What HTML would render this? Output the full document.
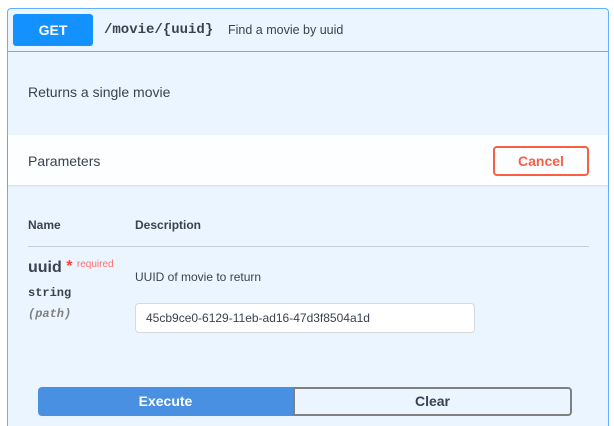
<!DOCTYPE html><html><head><style>
html,body{margin:0;padding:0}
body{width:614px;height:426px;background:#fff;font-family:"Liberation Sans",sans-serif;color:#3b4151}
.wrap{position:relative;width:614px;height:426px;overflow:hidden}
.box{position:absolute;left:7px;top:8px;width:600px;height:440px;border:1px solid #61affe;border-radius:4px;background:#ebf5ff}
.hdr{position:absolute;left:0;top:0;width:600px;height:42px;border-bottom:1px solid #61affe}
.get{position:absolute;left:5px;top:5px;width:80px;height:32px;background:#1391ff;color:#fff;border-radius:3px;font-weight:bold;font-size:14px;text-align:center;line-height:32px}
.path{position:absolute;left:96px;top:13px;font-family:"Liberation Mono",monospace;font-weight:bold;font-size:14px}
.sum{position:absolute;left:220px;top:14px;font-size:12.5px}
.abs{position:absolute}
</style></head><body><div class="wrap">
<div class="box">
<div class="hdr"><div class="get">GET</div><div class="path">/movie/{uuid}</div><div class="sum">Find a movie by uuid</div></div>
<div class="abs" style="left:20px;top:75px;font-size:14px">Returns a single movie</div>
<div class="abs" style="left:0;top:126px;width:600px;height:50px;background:rgba(255,255,255,.85);box-shadow:0 1px 2px rgba(0,0,0,.1)"></div>
<div class="abs" style="left:20px;top:144px;font-size:14px">Parameters</div>
<div class="abs" style="left:485px;top:137px;width:92px;height:26px;border:2px solid #f95f43;border-radius:4px;color:#f95f43;font-weight:bold;font-size:14px;text-align:center;line-height:26px">Cancel</div>
<div class="abs" style="left:20px;top:209px;font-size:12px;font-weight:bold">Name</div>
<div class="abs" style="left:127px;top:209px;font-size:12px;font-weight:bold">Description</div>
<div class="abs" style="left:20px;top:237px;width:561px;height:1px;background:#c5cdd6"></div>
<div class="abs" style="left:20px;top:250px;font-size:16px;font-weight:bold">uuid <span style="color:#f93e3e;font-size:16px;position:relative;top:-1px">*</span> <span style="color:#ff6f6f;font-size:10px;font-weight:normal;position:relative;top:-5px">required</span></div>
<div class="abs" style="left:20px;top:277px;font-family:'Liberation Mono',monospace;font-size:12px;font-weight:bold">string</div>
<div class="abs" style="left:20px;top:298px;font-family:'Liberation Mono',monospace;font-size:12px;font-weight:bold;font-style:italic;color:#808080">(path)</div>
<div class="abs" style="left:127px;top:261px;font-size:12px">UUID of movie to return</div>
<div class="abs" style="left:127px;top:294px;width:338px;height:28px;background:#fff;border:1px solid #d9d9d9;border-radius:4px;font-size:12px;line-height:28px;text-indent:10px">45cb9ce0-6129-11eb-ad16-47d3f8504a1d</div>
<div class="abs" style="left:30px;top:378px;width:255px;height:29px;background:#4990e2;border-radius:4px 0 0 4px;color:#fff;font-weight:bold;font-size:14px;text-align:center;line-height:29px">Execute</div>
<div class="abs" style="left:285px;top:378px;width:275px;height:25px;border:2px solid #808080;border-radius:0 4px 4px 0;font-weight:bold;font-size:14px;text-align:center;line-height:25px">Clear</div>
</div>
</div></body></html>
